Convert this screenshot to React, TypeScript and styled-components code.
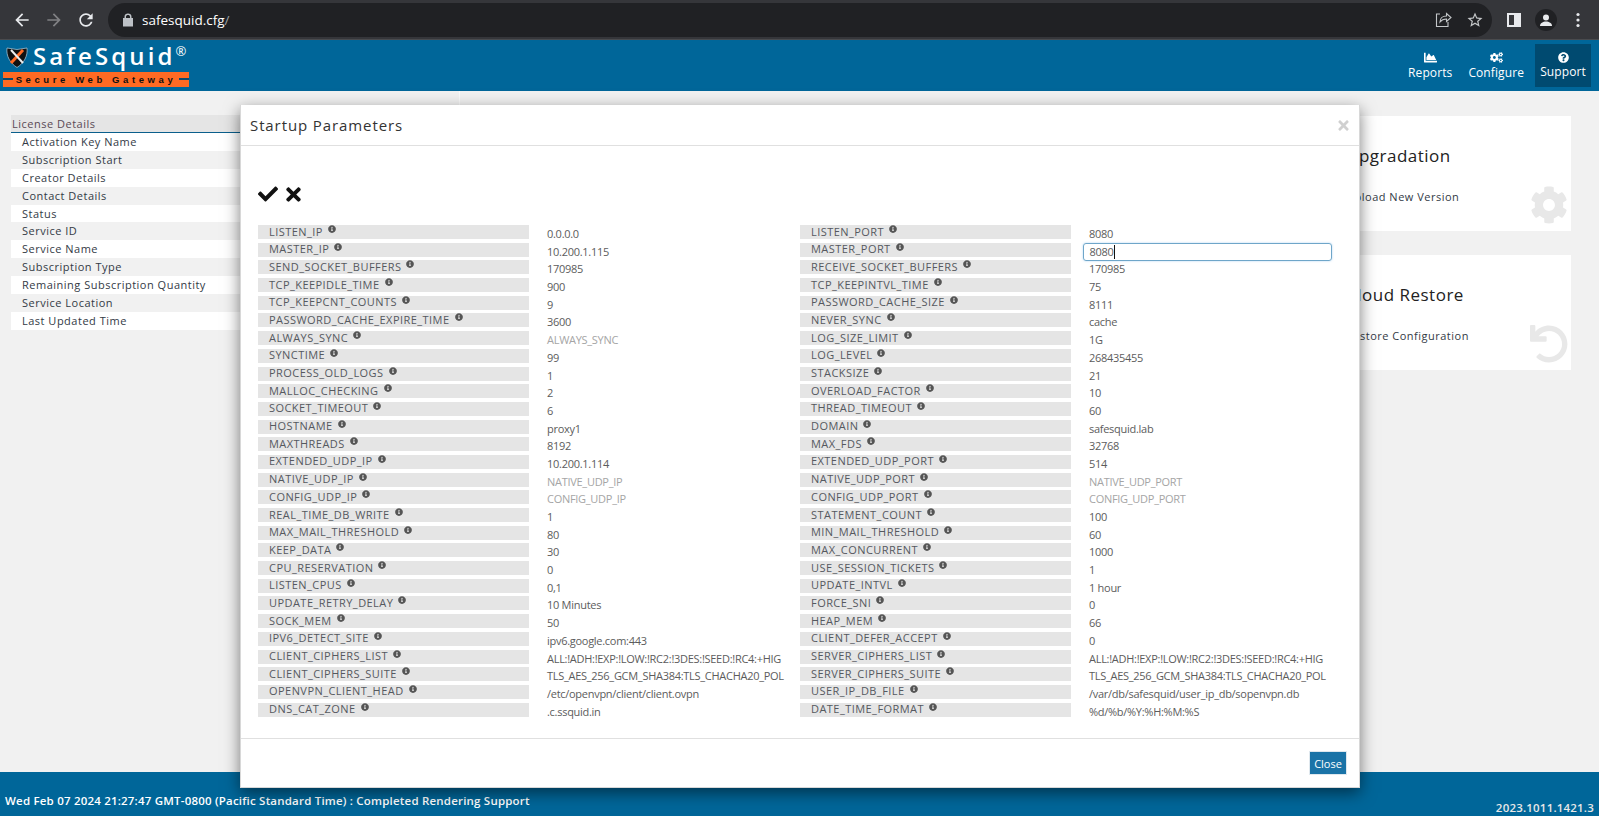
import { Fragment } from 'react';
import styled, { createGlobalStyle } from 'styled-components';
import {
  FaCheck,
  FaChartArea,
  FaCog,
  FaCogs,
  FaInfoCircle,
  FaQuestionCircle,
  FaTimes,
  FaUndo,
} from 'react-icons/fa';

const GlobalStyle = createGlobalStyle`
  html, body {
    margin: 0;
    height: 100%;
    overflow: hidden;
    background: #f1f1f1;
    font-family: 'Open Sans', 'Noto Sans', sans-serif;
  }
  * { box-sizing: border-box; }
`;

const Page = styled.div`
  position: relative;
  width: 1599px;
  height: 816px;
  display: flex;
  flex-direction: column;
  overflow: hidden;
`;

const BrowserBar = styled.div`
  height: 40px;
  flex-shrink: 0;
  background: #35363a;
  display: flex;
  align-items: center;
  padding-left: 6px;
  color: #e8eaed;
  border-bottom: 1px solid #4a4b4e;
`;

const NavButton = styled.span<{ $dim?: boolean }>`
  width: 32px;
  display: flex;
  justify-content: center;
  color: ${p => (p.$dim ? '#808184' : '#e8eaed')};
`;

const AddressBar = styled.div`
  margin-left: 6px;
  width: 1384px;
  height: 34px;
  border-radius: 17px;
  background: #202124;
  display: flex;
  align-items: center;
  padding: 0 2px 0 14px;
  font-size: 13.5px;
`;

const Url = styled.span`
  margin-left: 8px;
  flex: 1;
  color: #fff;
  span {
    color: #9aa0a6;
  }
`;

const AddressIcon = styled.span`
  width: 31px;
  display: flex;
  justify-content: center;
  color: #c4c7c9;
`;

const BrowserTools = styled.div`
  display: flex;
  align-items: center;
  margin-left: 15px;
`;

const PanelIcon = styled.span`
  width: 14px;
  height: 14px;
  border: 2px solid #e8eaed;
  border-right-width: 7px;
  background: #35363a;
`;

const Avatar = styled.span`
  width: 22px;
  height: 22px;
  margin-left: 14px;
  border-radius: 50%;
  background: #202124;
  display: flex;
  align-items: center;
  justify-content: center;
`;

const Dots = styled.svg`
  margin-left: 13px;
`;

const Header = styled.header`
  height: 51px;
  flex-shrink: 0;
  background: #006699;
  display: flex;
  align-items: center;
  justify-content: space-between;
  padding: 0 8px 0 3px;
`;

const Logo = styled.div`
  width: 186px;
  height: 46px;
  position: relative;
  align-self: flex-start;
  margin-top: 5px;
  color: #fff;
`;

const Shield = styled.svg`
  position: absolute;
  left: 3px;
  top: 1px;
`;

const LogoName = styled.div`
  position: absolute;
  left: 30px;
  top: -5px;
  font-size: 24px;
  line-height: 32px;
  font-weight: 600;
  letter-spacing: 3.1px;
  white-space: nowrap;
  sup {
    font-size: 13px;
    font-weight: 400;
    vertical-align: 9px;
    line-height: 0;
    letter-spacing: 0;
  }
`;

const LogoBand = styled.div`
  position: absolute;
  left: 0;
  right: 0;
  top: 27px;
  height: 15px;
  background: #ff6a23;
  color: #111;
  display: flex;
  align-items: center;
  justify-content: center;
  font-family: 'Liberation Sans', sans-serif;
  font-size: 9.5px;
  font-weight: 700;
  letter-spacing: 3.6px;
  white-space: nowrap;
  &::before,
  &::after {
    content: '';
    position: absolute;
    top: 6px;
    width: 10px;
    height: 2px;
    background: #0a4a6e;
  }
  &::before {
    left: 0;
  }
  &::after {
    right: 0;
  }
`;

const Menu = styled.nav`
  display: flex;
  align-items: stretch;
  height: 43px;
`;

const MenuItem = styled.div<{ $active?: boolean }>`
  width: ${p => (p.$active ? '56px' : 'auto')};
  padding: ${p => (p.$active ? '0' : '0 8px')};
  margin-left: ${p => (p.$active ? '3px' : '0')};
  background: ${p => (p.$active ? '#004a70' : 'transparent')};
  color: #fff;
  font-size: 12px;
  display: flex;
  flex-direction: column;
  align-items: center;
  justify-content: center;
  gap: 1px;
  line-height: 16px;
  letter-spacing: 0.1px;
`;

const Main = styled.main`
  flex: 1;
  position: relative;
  display: flex;
  justify-content: space-between;
  padding-right: 28px;
`;

const LeftPane = styled.div`
  width: 460px;
  padding: 24px 0 0 11px;
  border-right: 1px solid #fafafa;
`;

const LicenseTable = styled.div`
  font-size: 11px;
  letter-spacing: 0.5px;
  color: #333a45;
`;

const LicenseHead = styled.div`
  height: 18px;
  background: #e5e5e5;
  border-bottom: 1px solid #0a5f8c;
  padding-left: 1px;
  line-height: 17px;
  color: #5b4a55;
`;

const LicenseRow = styled.div<{ $odd: boolean }>`
  height: 17.9px;
  line-height: 18px;
  padding-left: 11px;
  background: ${p => (p.$odd ? '#f1f1f1' : '#fff')};
`;

const Cards = styled.div`
  width: 240px;
  display: flex;
  flex-direction: column;
  gap: 24px;
  margin-top: 25px;
`;

const Card = styled.div`
  height: 115px;
  background: #fff;
  position: relative;
  padding: 28px 0 0 15px;
  color: #222;
`;

const CardTitle = styled.div`
  font-size: 17px;
  line-height: 24px;
  letter-spacing: 0.5px;
`;

const CardText = styled.div`
  font-size: 11px;
  line-height: 16px;
  margin-top: 21px;
  letter-spacing: 0.5px;
  color: #333a45;
`;

const CardIcon = styled.span`
  position: absolute;
  right: 3px;
  bottom: 7px;
  color: #e8e8e8;
  display: flex;
`;

const Footer = styled.footer`
  height: 44px;
  flex-shrink: 0;
  background: #006699;
  color: #fff;
  font-size: 11.5px;
  font-weight: 600;
  letter-spacing: 0.2px;
  display: flex;
  justify-content: space-between;
  padding: 21px 5px 0;
`;

const Version = styled.span`
  padding-top: 7px;
  color: #e8e8e8;
`;

const Modal = styled.div`
  position: absolute;
  left: 240px;
  top: 105px;
  width: 1120px;
  height: 683px;
  background: #fff;
  border: 1px solid #d8d8d8;
  border-top: 0;
  box-shadow: 0 5px 15px rgba(0, 0, 0, 0.5);
  display: flex;
  flex-direction: column;
`;

const ModalHead = styled.div`
  height: 41px;
  flex-shrink: 0;
  border-bottom: 1px solid #e0e0e0;
  display: flex;
  align-items: center;
  justify-content: space-between;
  padding: 0 8px 0 9px;
`;

const ModalTitle = styled.div`
  font-size: 15px;
  color: #333;
  letter-spacing: 0.9px;
`;

const CloseX = styled.span`
  color: #d0d0d0;
  display: flex;
`;

const ModalBody = styled.div`
  flex: 1;
  padding: 38px 17px 0;
`;

const Actions = styled.div`
  height: 41px;
  display: flex;
  gap: 5px;
  color: #111;
`;

const ParamGrid = styled.div`
  display: grid;
  grid-template-columns: 271px 1fr 271px 1fr;
  grid-auto-rows: 17.7px;
  align-items: start;
`;

const ParamLabel = styled.div`
  height: 14px;
  background: #e5e5e5;
  padding: 0 0 2px 11px;
  font-size: 11px;
  line-height: 13px;
  letter-spacing: 0.45px;
  color: #55595f;
  white-space: nowrap;
  display: flex;
  align-items: center;
  gap: 5px;
  svg {
    position: relative;
    top: -2px;
    color: #555;
  }
`;

const ParamValue = styled.div<{ $empty?: boolean }>`
  padding-left: 18px;
  padding-top: 2px;
  font-size: 11px;
  line-height: 14px;
  height: 17px;
  letter-spacing: -0.28px;
  color: ${p => (p.$empty ? '#a5a5a5' : '#5c5c5c')};
  white-space: nowrap;
`;

const ParamInput = styled.div`
  margin: 0 0 0 11.5px;
  width: 249px;
  height: 18px;
  border: 1px solid #6fa6c9;
  border-radius: 3px;
  box-shadow: 0 0 2px rgba(102, 175, 233, 0.6);
  padding-left: 6px;
  font-size: 11px;
  letter-spacing: -0.25px;
  color: #5c5c5c;
  display: flex;
  align-items: center;
  i {
    display: block;
    width: 1px;
    height: 14px;
    background: #111;
  }
`;

const ModalFoot = styled.div`
  height: 49px;
  flex-shrink: 0;
  border-top: 1px solid #e0e0e0;
  display: flex;
  justify-content: flex-end;
  padding: 12px 12px 0 0;
`;

const CloseButton = styled.button`
  width: 38px;
  height: 24px;
  padding: 0;
  background: #1a73a7;
  color: #fff;
  border: 1px solid #dfe8ee;
  font: 11px 'Open Sans', sans-serif;
`;

const license = [
  'Activation Key Name',
  'Subscription Start',
  'Creator Details',
  'Contact Details',
  'Status',
  'Service ID',
  'Service Name',
  'Subscription Type',
  'Remaining Subscription Quantity',
  'Service Location',
  'Last Updated Time',
];

// [left name, left value, right name, right value]; an empty value shows its name greyed out
const params: [string, string, string, string][] = [
  ['LISTEN_IP', '0.0.0.0', 'LISTEN_PORT', '8080'],
  ['MASTER_IP', '10.200.1.115', 'MASTER_PORT', '8080'],
  ['SEND_SOCKET_BUFFERS', '170985', 'RECEIVE_SOCKET_BUFFERS', '170985'],
  ['TCP_KEEPIDLE_TIME', '900', 'TCP_KEEPINTVL_TIME', '75'],
  ['TCP_KEEPCNT_COUNTS', '9', 'PASSWORD_CACHE_SIZE', '8111'],
  ['PASSWORD_CACHE_EXPIRE_TIME', '3600', 'NEVER_SYNC', 'cache'],
  ['ALWAYS_SYNC', '', 'LOG_SIZE_LIMIT', '1G'],
  ['SYNCTIME', '99', 'LOG_LEVEL', '268435455'],
  ['PROCESS_OLD_LOGS', '1', 'STACKSIZE', '21'],
  ['MALLOC_CHECKING', '2', 'OVERLOAD_FACTOR', '10'],
  ['SOCKET_TIMEOUT', '6', 'THREAD_TIMEOUT', '60'],
  ['HOSTNAME', 'proxy1', 'DOMAIN', 'safesquid.lab'],
  ['MAXTHREADS', '8192', 'MAX_FDS', '32768'],
  ['EXTENDED_UDP_IP', '10.200.1.114', 'EXTENDED_UDP_PORT', '514'],
  ['NATIVE_UDP_IP', '', 'NATIVE_UDP_PORT', ''],
  ['CONFIG_UDP_IP', '', 'CONFIG_UDP_PORT', ''],
  ['REAL_TIME_DB_WRITE', '1', 'STATEMENT_COUNT', '100'],
  ['MAX_MAIL_THRESHOLD', '80', 'MIN_MAIL_THRESHOLD', '60'],
  ['KEEP_DATA', '30', 'MAX_CONCURRENT', '1000'],
  ['CPU_RESERVATION', '0', 'USE_SESSION_TICKETS', '1'],
  ['LISTEN_CPUS', '0,1', 'UPDATE_INTVL', '1 hour'],
  ['UPDATE_RETRY_DELAY', '10 Minutes', 'FORCE_SNI', '0'],
  ['SOCK_MEM', '50', 'HEAP_MEM', '66'],
  ['IPV6_DETECT_SITE', 'ipv6.google.com:443', 'CLIENT_DEFER_ACCEPT', '0'],
  ['CLIENT_CIPHERS_LIST', 'ALL:!ADH:!EXP:!LOW:!RC2:!3DES:!SEED:!RC4:+HIG', 'SERVER_CIPHERS_LIST', 'ALL:!ADH:!EXP:!LOW:!RC2:!3DES:!SEED:!RC4:+HIG'],
  ['CLIENT_CIPHERS_SUITE', 'TLS_AES_256_GCM_SHA384:TLS_CHACHA20_POL', 'SERVER_CIPHERS_SUITE', 'TLS_AES_256_GCM_SHA384:TLS_CHACHA20_POL'],
  ['OPENVPN_CLIENT_HEAD', '/etc/openvpn/client/client.ovpn', 'USER_IP_DB_FILE', '/var/db/safesquid/user_ip_db/sopenvpn.db'],
  ['DNS_CAT_ZONE', '.c.ssquid.in', 'DATE_TIME_FORMAT', '%d/%b/%Y:%H:%M:%S'],
];

function Glyph({ d, size = 24 }: { d: string; size?: number }) {
  return (
    <svg width={size} height={size} viewBox="0 0 24 24" fill="currentColor">
      <path d={d} />
    </svg>
  );
}

function AddressLock() {
  return (
    <svg width="12" height="14" viewBox="0 0 12 14" fill="#bdc1c6">
      <path d="M2.5 5V3.7C2.5 1.700 4 .5 6 .5s3.5 1.200 3.5 3.200V5H11v8.500H1V5zM4 5h4V3.700C8 2.600 7.100 2 6 2S4 2.600 4 3.700z" />
    </svg>
  );
}

function Param({ name, value }: { name: string; value: string }) {
  return (
    <>
      <ParamLabel>
        {name} <FaInfoCircle size={8} />
      </ParamLabel>
      {name === 'MASTER_PORT' ? (
        <ParamInput>
          {value}
          <i />
        </ParamInput>
      ) : (
        <ParamValue $empty={!value}>{value || name}</ParamValue>
      )}
    </>
  );
}

export default function App() {
  return (
    <Page>
      <GlobalStyle />
      <BrowserBar>
        <NavButton>
          <Glyph d="M20 11H7.830l5.590-5.590L12 4l-8 8 8 8 1.410-1.410L7.830 13H20v-2z" size={20} />
        </NavButton>
        <NavButton $dim>
          <Glyph d="M4 11h12.170l-5.590-5.590L12 4l8 8-8 8-1.410-1.410L16.170 13H4v-2z" size={20} />
        </NavButton>
        <NavButton>
          <Glyph
            d="M17.650 6.350C16.200 4.900 14.210 4 12 4c-4.420 0-7.990 3.580-7.990 8s3.570 8 7.990 8c3.730 0 6.840-2.550 7.730-6h-2.080c-.82 2.330-3.040 4-5.650 4-3.310 0-6-2.690-6-6s2.690-6 6-6c1.660 0 3.140.69 4.220 1.780L13 11h7V4l-2.350 2.350z"
            size={20}
          />
        </NavButton>
        <AddressBar>
          <AddressLock />
          <Url>
            safesquid.cfg<span>/</span>
          </Url>
          <AddressIcon>
            <svg width="17" height="17" viewBox="0 0 17 17" fill="none" stroke="currentColor" strokeWidth="1.100">
              <path d="M5 3H1.500v12.500H13V11" />
              <path d="M5 11c0-3.500 2.500-6 6.500-6V2.500L16 6.500l-4.500 4V8C8.500 8 6.500 9 5 11z" />
            </svg>
          </AddressIcon>
          <AddressIcon>
            <Glyph
              d="M22 9.240l-7.190-.62L12 2 9.190 8.630 2 9.240l5.460 4.730L5.820 21 12 17.270 18.180 21l-1.630-7.030L22 9.240zM12 15.400l-3.760 2.270 1-4.280-3.320-2.880 4.380-.38L12 6.100l1.710 4.040 4.380.38-3.320 2.880 1 4.280L12 15.400z"
              size={18}
            />
          </AddressIcon>
        </AddressBar>
        <BrowserTools>
          <PanelIcon />
          <Avatar>
            <svg width="14" height="14" viewBox="0 0 14 14" fill="#e8eaed">
              <circle cx="7" cy="4.500" r="3" />
              <path d="M1 13c0-3 3-4.500 6-4.500s6 1.500 6 4.500z" />
            </svg>
          </Avatar>
          <Dots width="16" height="16" viewBox="0 0 16 16" fill="#e8eaed">
            <circle cx="8" cy="2.500" r="1.600" />
            <circle cx="8" cy="8" r="1.600" />
            <circle cx="8" cy="13.500" r="1.600" />
          </Dots>
        </BrowserTools>
      </BrowserBar>
      <Header>
        <Logo>
          <Shield width="22" height="22" viewBox="0 0 22 22">
            <path d="M1 2 L11 3.500 L21 2 C22 10 18 17 11 21.500 C4 17 0 10 1 2z" fill="#111" stroke="#9fc0d2" strokeWidth="0.800" />
            <path d="M17 4 L5 17" stroke="#ff6a23" strokeWidth="3" />
            <path d="M5 4 L17 17" stroke="#eeeeee" strokeWidth="2" />
          </Shield>
          <LogoName>
            SafeSquid<sup>®</sup>
          </LogoName>
          <LogoBand>Secure Web Gateway</LogoBand>
        </Logo>
        <Menu>
          <MenuItem>
            <FaChartArea size={13} />
            Reports
          </MenuItem>
          <MenuItem>
            <FaCogs size={13} />
            Configure
          </MenuItem>
          <MenuItem $active>
            <FaQuestionCircle size={11} />
            Support
          </MenuItem>
        </Menu>
      </Header>
      <Main>
        <LeftPane>
          <LicenseTable>
            <LicenseHead>License Details</LicenseHead>
            {license.map((l, i) => (
              <LicenseRow key={l} $odd={i % 2 === 1}>
                {l}
              </LicenseRow>
            ))}
          </LicenseTable>
        </LeftPane>
        <Cards>
          <Card>
            <CardTitle>Upgradation</CardTitle>
            <CardText>Upload New Version</CardText>
            <CardIcon>
              <FaCog size={38} />
            </CardIcon>
          </Card>
          <Card>
            <CardTitle>Cloud Restore</CardTitle>
            <CardText>Restore Configuration</CardText>
            <CardIcon>
              <FaUndo size={38} />
            </CardIcon>
          </Card>
        </Cards>
      </Main>
      <Footer>
        <span>Wed Feb 07 2024 21:27:47 GMT-0800 (Pacific Standard Time) : Completed Rendering Support</span>
        <Version>2023.1011.1421.3</Version>
      </Footer>
      <Modal>
        <ModalHead>
          <ModalTitle>Startup Parameters</ModalTitle>
          <CloseX>
            <FaTimes size={15} />
          </CloseX>
        </ModalHead>
        <ModalBody>
          <Actions>
            <FaCheck size={20} />
            <FaTimes size={21} />
          </Actions>
          <ParamGrid>
            {params.map(row => (
              <Fragment key={row[0]}>
                <Param name={row[0]} value={row[1]} />
                <Param name={row[2]} value={row[3]} />
              </Fragment>
            ))}
          </ParamGrid>
        </ModalBody>
        <ModalFoot>
          <CloseButton>Close</CloseButton>
        </ModalFoot>
      </Modal>
    </Page>
  );
}
